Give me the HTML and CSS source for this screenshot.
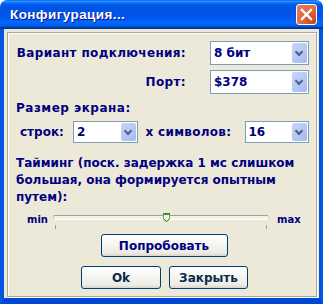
FILE: index.html
```html
<!DOCTYPE html>
<html lang="ru">
<head>
    <meta charset="UTF-8">
    <title>Конфигурация...</title>
    <link rel="stylesheet" href="styles.css">
</head>
<body>
    <div class="window">
        <div class="titlebar">
            <span class="title">Конфигурация...</span>
            <div class="close-btn">
                <svg width="13" height="13" viewBox="0 0 13 13"><path d="M2 2 L11 11 M11 2 L2 11" stroke="#fff" stroke-width="2.4" stroke-linecap="square"/></svg>
            </div>
        </div>
        <div class="client">
            <div class="frame">
                <div class="row row-conn">
                    <span class="label label-wide">Вариант подключения:</span>
                    <div class="combo combo-wide"><span>8 бит</span><i class="drop"></i></div>
                </div>
                <div class="row row-port">
                    <span class="label label-wide">Порт:</span>
                    <div class="combo combo-wide"><span>$378</span><i class="drop"></i></div>
                </div>

                <div class="caption">Размер экрана:</div>
                <div class="row row-size">
                    <span class="label label-rows">строк:</span>
                    <div class="combo combo-small"><span>2</span><i class="drop"></i></div>
                    <span class="label label-cols">x символов:</span>
                    <div class="combo combo-small"><span>16</span><i class="drop"></i></div>
                </div>

                <div class="timing">Тайминг (поск. задержка 1 мс слишком большая, она формируется опытным путем):</div>

                <div class="slider-row">
                    <span class="slider-label">min</span>
                    <div class="slider">
                        <div class="track"></div>
                        <svg class="thumb" width="7" height="10" viewBox="0 0 7 10">
                            <path d="M0.5 0.5 H6.5 V6 L3.5 9 L0.5 6 Z" fill="#f4f3ee" stroke="#8c8a7c"/>
                            <rect x="0" y="0" width="7" height="2" fill="#21a121"/>
                            <path d="M1 6 L3.5 8.5 L6 6" fill="none" stroke="#1ca31c"/>
                        </svg>
                        <i class="tick tick-left"></i>
                        <i class="tick tick-right"></i>
                    </div>
                    <span class="slider-label">max</span>
                </div>

                <div class="buttons">
                    <div class="btn btn-try">Попробовать</div>
                    <div class="btn-row">
                        <div class="btn btn-ok">Ok</div>
                        <div class="btn btn-close">Закрыть</div>
                    </div>
                </div>
            </div>
        </div>
    </div>
</body>
</html>
```

FILE: styles.css
```css
* {
    margin: 0;
    padding: 0;
    box-sizing: border-box;
}

body {
    background: #fff;
    font-family: "DejaVu Sans", Verdana, sans-serif;
    font-weight: bold;
    font-size: 12px;
}

.window {
    width: 323px;
    height: 304px;
    display: flex;
    flex-direction: column;
}

.titlebar {
    height: 29px;
    display: flex;
    align-items: center;
    justify-content: space-between;
    padding: 0 6px 0 10px;
    border-radius: 7px 7px 0 0;
    background: linear-gradient(to bottom, #0058ee 0%, #3593ff 4%, #288eff 6%, #127dff 8%, #036ffc 10%, #0262ee 14%, #0057e5 20%, #0054e3 24%, #0055eb 56%, #005bf5 66%, #026afe 76%, #0062ef 86%, #0052d6 92%, #0040ab 94%, #003092 100%);
}

.title {
    color: #fff;
    font-family: "Liberation Sans", Arial, sans-serif;
    font-size: 13.5px;
    letter-spacing: 0.4px;
    text-shadow: 1px 1px #0f1089;
}

.close-btn {
    width: 21px;
    height: 21px;
    border: 1px solid #fff;
    border-radius: 3px;
    display: flex;
    align-items: center;
    justify-content: center;
    background: radial-gradient(circle at 85% 85%, #cc4617 0%, #dc6236 40%, #e8835f 100%);
}

.client {
    flex: 1;
    background: #ece9d8;
    border-left: 4px solid #0055e5;
    border-right: 4px solid #0055e5;
    border-bottom: 5px solid #0046d5;
    box-shadow: inset 0 -1px 0 #0053e0;
    padding: 3px 2px 2px 3px;
}

.frame {
    height: 265px;
    border: 1px solid #aca899;
    box-shadow: 1px 1px 0 #fff, inset 1px 1px 0 #fff;
    padding: 8px 7px 0 8px;
    color: #000080;
}

.row {
    display: flex;
    align-items: center;
}

.label {
    white-space: nowrap;
    flex-shrink: 0;
}

.row-conn,
.row-port {
    height: 24px;
}

.row-port {
    margin-top: 5px;
}

.label-wide {
    width: 170px;
    text-align: right;
    margin-right: 24px;
    letter-spacing: 0.35px;
}

.combo {
    height: 24px;
    border: 1px solid #7f9db9;
    background: #fff;
    display: flex;
    align-items: center;
    justify-content: space-between;
    padding: 1px 1px 1px 3px;
}

.combo-wide {
    width: 100px;
}

.combo-small {
    width: 65px;
    height: 22px;
}

.drop {
    width: 15px;
    height: 100%;
    border-radius: 2px;
    background: #b6c8f4 linear-gradient(135deg, #c7d5fa 0%, #b3c6f4 60%, #a4b9ee 100%);
    position: relative;
}

.drop::after {
    content: "";
    position: absolute;
    left: 4px;
    top: 50%;
    width: 4px;
    height: 4px;
    margin-top: -4px;
    border-right: 2px solid #4d6185;
    border-bottom: 2px solid #4d6185;
    transform: rotate(45deg);
}

.caption {
    margin-top: 7px;
    line-height: 15px;
    letter-spacing: 0.5px;
}

.row-size {
    margin-top: 5px;
    height: 22px;
}

.label-rows {
    margin-left: 4px;
    width: 53px;
}

.label-cols {
    margin-left: 8px;
    width: 99px;
    letter-spacing: 0.3px;
}

.timing {
    margin-top: 12px;
    line-height: 17px;
    width: 300px;
}

.slider-row {
    display: flex;
    align-items: center;
    height: 22px;
    margin-top: 2px;
    font-size: 10px;
}

.slider-label {
    margin-left: 11px;
}

.slider-label:last-child {
    margin-left: 8px;
}

.slider {
    position: relative;
    width: 216px;
    height: 22px;
    margin-left: 5px;
}

.track {
    position: absolute;
    left: 0;
    right: 0;
    top: 7px;
    height: 5px;
    border-top: 1px solid #a3a08f;
    border-left: 1px solid #c8c5b8;
    border-right: 1px solid #d6d3c6;
    border-bottom: 1px solid #fff;
    border-radius: 2px;
    background: #f2f1eb;
}

.thumb {
    position: absolute;
    left: 110px;
    top: 5px;
}

.tick {
    position: absolute;
    top: 17px;
    width: 1px;
    height: 4px;
    background: #a3a08f;
}

.tick-left {
    left: 2px;
}

.tick-right {
    right: 2px;
}

.buttons {
    display: flex;
    flex-direction: column;
    align-items: center;
    margin-top: 4px;
}

.btn {
    height: 23px;
    border: 1px solid #003c74;
    border-radius: 3px;
    background: linear-gradient(to bottom, #fff 0%, #f6f6f2 40%, #ecebe5 85%, #d8d4c8 100%);
    display: flex;
    align-items: center;
    justify-content: center;
    font-size: 12px;
}

.btn-try {
    width: 127px;
    color: #000080;
    margin-left: 3px;
}

.btn-row {
    display: flex;
    gap: 8px;
    margin-top: 9px;
    margin-left: 4px;
}

.btn-ok,
.btn-close {
    color: #0c2a4e;
}

.btn-ok {
    width: 80px;
}

.btn-close {
    width: 79px;
}
```
